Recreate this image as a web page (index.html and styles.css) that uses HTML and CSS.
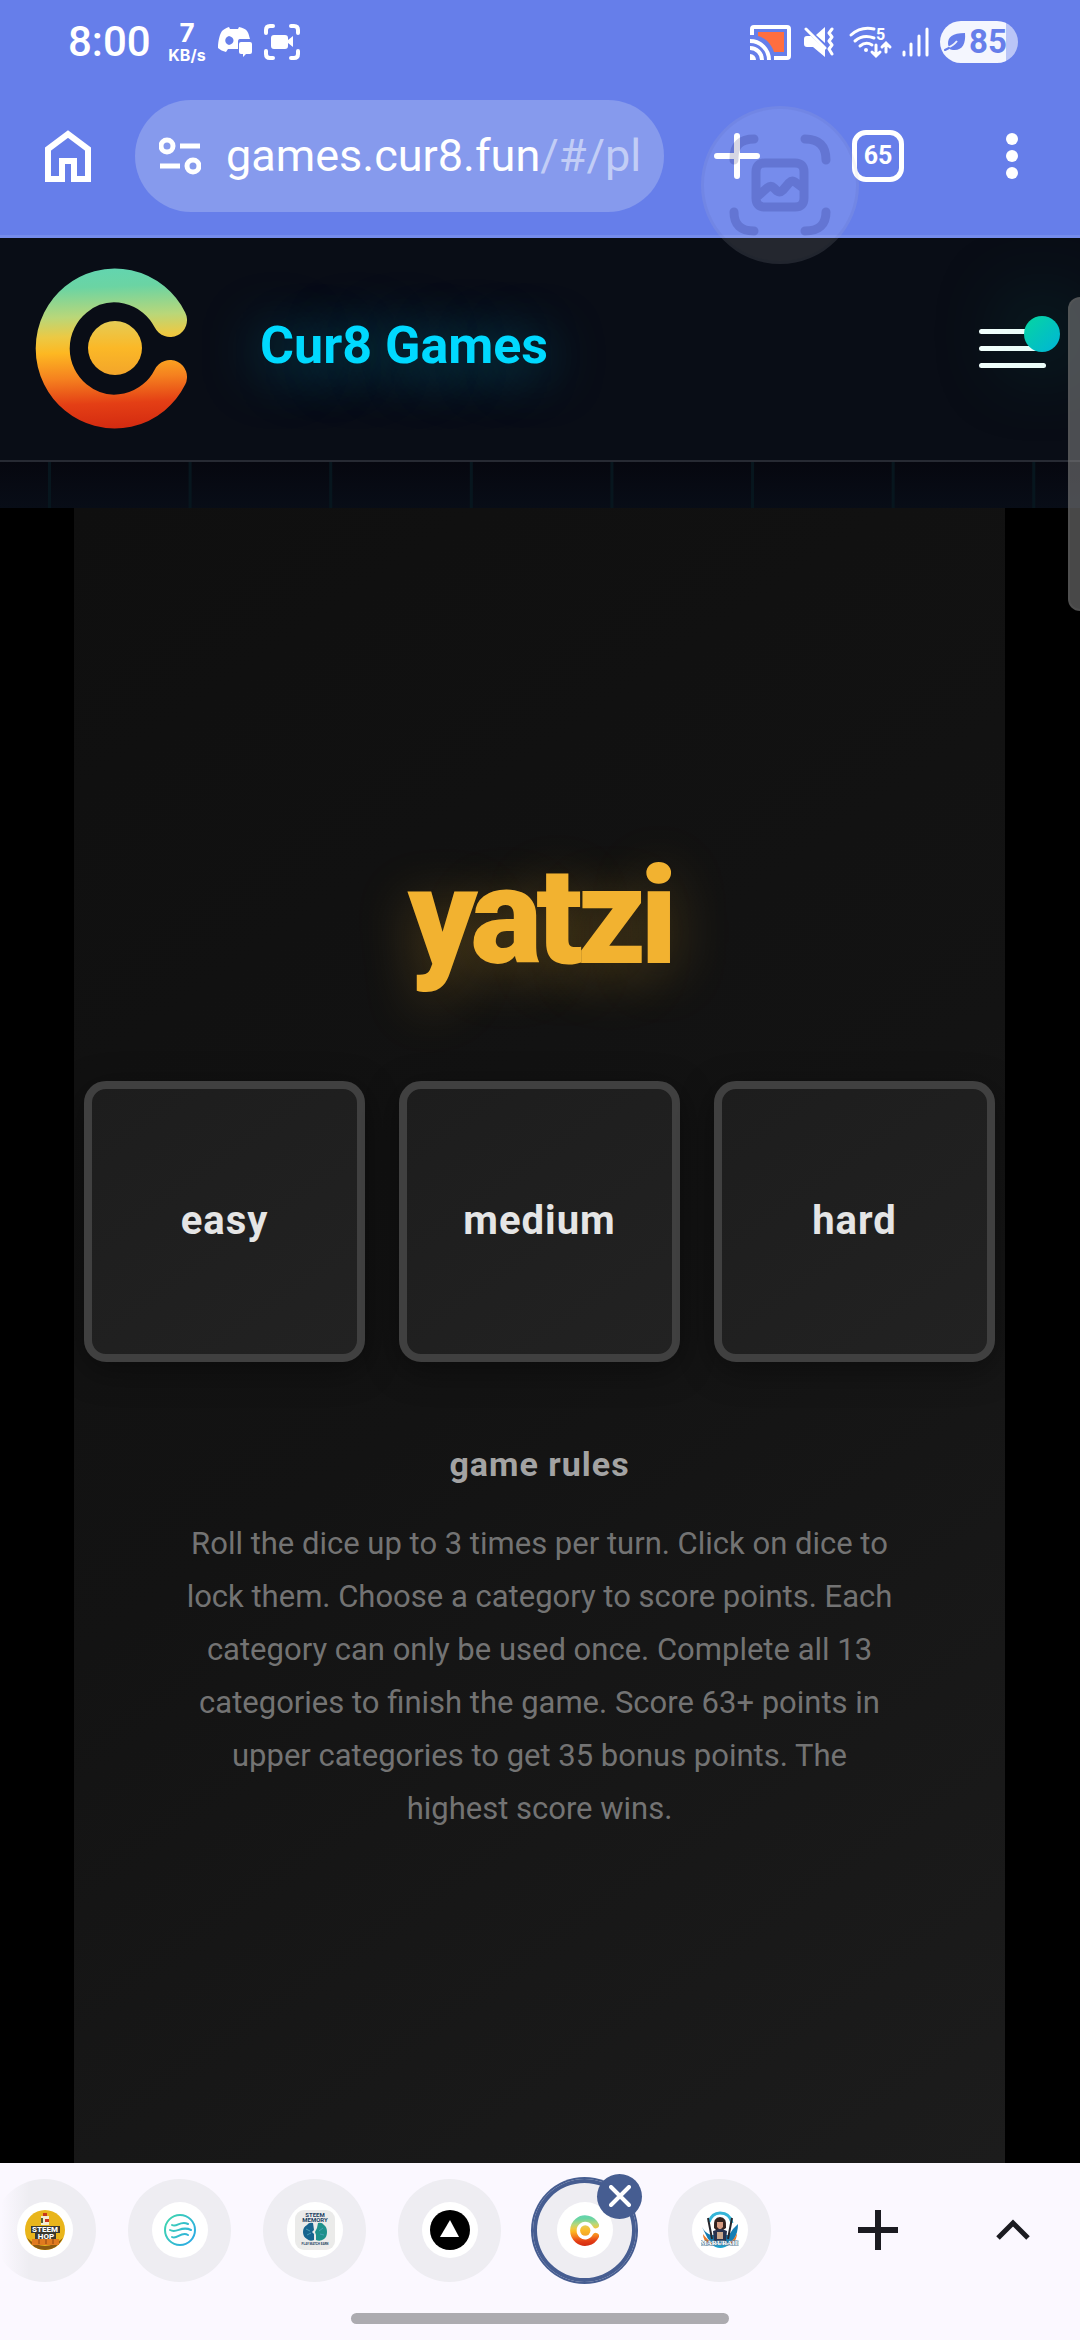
FILE: index.html
```html
<!DOCTYPE html>
<html lang="en">
<head>
<meta charset="utf-8">
<meta name="viewport" content="width=device-width, initial-scale=1">
<title>Cur8 Games - yatzi</title>
<link rel="stylesheet" href="styles.css">
</head>
<body>
<svg class="defs" aria-hidden="true">
  <defs>
    <linearGradient id="cur8-fill" gradientUnits="userSpaceOnUse" x1="75" y1="0" x2="81" y2="162">
      <stop offset="0" stop-color="#62d5b0"/>
      <stop offset=".12" stop-color="#6bd4a3"/>
      <stop offset=".3" stop-color="#b9d779"/>
      <stop offset=".42" stop-color="#ecc944"/>
      <stop offset=".52" stop-color="#fdb822"/>
      <stop offset=".68" stop-color="#f5811f"/>
      <stop offset=".84" stop-color="#e43f15"/>
      <stop offset="1" stop-color="#d32a10"/>
    </linearGradient>
    <linearGradient id="cur8-core" x1="0" y1="0" x2="0" y2="1">
      <stop offset="0" stop-color="#e5cc55"/>
      <stop offset=".5" stop-color="#fbb827"/>
      <stop offset="1" stop-color="#f3a52a"/>
    </linearGradient>
    <symbol id="cur8" viewBox="0 0 152 162">
      <path d="M135 53A62 63 0 1 0 135 110" fill="none" stroke="url(#cur8-fill)" stroke-width="34" stroke-linecap="round"/>
      <circle cx="80" cy="81" r="27" fill="url(#cur8-core)"/>
    </symbol>
  </defs>
</svg>

<header class="chrome">
  <div class="status">
    <span class="clock">8:00</span>
    <span class="speed"><b class="speed-value">7</b><span class="speed-unit">KB/s</span></span>
    <svg class="discord" width="34" height="30" viewBox="0 0 34 30" fill="#fff">
      <path fill-rule="evenodd" d="M11 0L12 2H20L21 0C25 1 28 2 29 4C31 7 31 9 32 12H22C20 12 20 14 20 15V22H10L8 25C5 24 2 23 0 21C0 13 2 7 4 4C6 2 8 1 11 0ZM11 9C6 10 6 17 11 18C17 17 17 10 11 9Z"/>
      <path d="M23 15H32Q34 15 34 17V25Q34 27 32 27H28L25 30V27H23Q21 27 21 25V17Q21 15 23 15Z"/>
    </svg>
    <svg width="36" height="36" viewBox="0 0 36 36" fill="none" stroke="#fff" stroke-width="4" stroke-linecap="round">
      <path d="M2 9V6Q2 2 6 2H9M27 2H30Q34 2 34 6V9M34 27V30Q34 34 30 34H27M9 34H6Q2 34 2 30V27"/>
      <path fill="#fff" stroke="none" d="M10 11H21Q24 11 24 14V16L29 12V23L24 19V22Q24 25 21 25H10Q7 25 7 22V14Q7 11 10 11Z"/>
    </svg>
    <span class="spacer"></span>
    <svg class="cast" width="41" height="35" viewBox="0 0 41 35">
      <path fill="#ff6e40" d="M8 7H34V27H24C21 18 15 13 8 11Z"/>
      <path fill="none" stroke="#fff" stroke-width="4" d="M2 10V4Q2 2 4 2H37Q39 2 39 4V31Q39 33 37 33H24M0 16A19 19 0 0 1 19 35M0 23A12 12 0 0 1 12 35"/>
      <path fill="#fff" d="M0 29A6 6 0 0 1 6 35H0Z"/>
    </svg>
    <svg class="mute" width="30" height="30" viewBox="0 0 30 30">
      <path fill="#fff" d="M0 12Q0 9 3 9H7L21 22V30L9 20H3Q0 20 0 17ZM12 8L21 0V16Z"/>
      <path fill="none" stroke="#fff" stroke-width="3" stroke-linecap="round" d="M2 2L21 21"/>
      <path fill="none" stroke="#fff" stroke-width="3" stroke-linecap="round" stroke-linejoin="round" d="M28 2L25 6L28 10L25 14L28 18L25 22L28 27"/>
    </svg>
    <svg class="wifi" width="43" height="32" viewBox="0 0 43 32" fill="none" stroke="#fff" stroke-width="3" stroke-linecap="round">
      <path d="M2 9Q12 0 25 3M6 15Q14 8 25 12M11 20Q17 15 23 19"/>
      <circle cx="17" cy="24" r="2" fill="#fff" stroke="none"/>
      <path d="M27 19V29M23 26L27 30L31 26M37 26V18M33 21L37 17L41 21"/>
      <text x="27" y="14" fill="#fff" stroke="none" class="wifi-band">5</text>
    </svg>
    <svg class="signal" width="27" height="30" viewBox="0 0 27 30" stroke="#fff" stroke-width="3" stroke-linecap="round">
      <path d="M2 25V28M9 17V28M17 9V28M25 2V28"/>
    </svg>
    <span class="battery">
      <svg width="22" height="20" viewBox="0 0 22 20"><path fill="#667eea" d="M4 12C4 5 8 1 21 1C22 12 18 19 9 18Q6 18 5 16Z"/><path fill="none" stroke="#eef1fd" stroke-width="2" d="M3 16Q9 14 13 9"/><path fill="none" stroke="#667eea" stroke-width="2" stroke-linecap="round" d="M1 18L5 16"/></svg>
      <span>85</span>
    </span>
  </div>
  <div class="toolbar">
    <button class="tool" aria-label="Home">
      <svg width="46" height="52" viewBox="0 0 46 52" fill="none" stroke="#fff" stroke-width="6"><path d="M3 49V19L23 4L43 19V49H29V31H17V49Z"/></svg>
    </button>
    <div class="omnibox">
      <button class="tool" aria-label="Site settings">
        <svg width="42" height="38" viewBox="0 0 42 38" fill="none" stroke="#fff" stroke-width="5"><circle cx="8" cy="9" r="6"/><circle cx="34" cy="29" r="6"/><path d="M21 9H41M1 29H21"/></svg>
      </button>
      <input class="host" type="text" aria-label="Address" value="games.cur8.fun"><span class="path">/#/pla</span>
    </div>
    <button class="tool new-tab" aria-label="New tab">
      <svg width="46" height="46" viewBox="0 0 46 46" stroke="#fff" stroke-width="6" stroke-linecap="round"><path d="M23 3V43M3 23H43"/></svg>
    </button>
    <button class="tabs" aria-label="Switch tabs">65</button>
    <button class="tool more" aria-label="More options">
      <svg width="12" height="48" viewBox="0 0 12 48" fill="#fff"><circle cx="6" cy="7" r="6"/><circle cx="6" cy="24" r="6"/><circle cx="6" cy="41" r="6"/></svg>
    </button>
  </div>
  <div class="capture" aria-hidden="true">
    <svg width="102" height="102" viewBox="0 0 102 102" fill="none" stroke="#000050" stroke-opacity=".16" stroke-width="9" stroke-linecap="round" stroke-linejoin="round">
      <path d="M5 26V24Q5 5 25 5M76 5Q97 5 97 26M97 78Q97 97 76 97M25 97Q5 97 5 78"/>
      <path d="M36 29H66Q75 29 75 38V64Q75 73 66 73H36Q27 73 27 64V38Q27 29 36 29ZM29 62L38 54Q42 51 45 54L48 57Q51 59 54 56L60 49Q63 46 66 48L74 54"/>
    </svg>
  </div>
</header>

<main class="page">
  <nav class="site-header">
    <svg class="logo" width="152" height="162" role="img" aria-label="Cur8"><use href="#cur8"/></svg>
    <a class="brand" href="#/">Cur8 Games</a>
    <button class="menu" aria-label="Menu"><span></span><span></span><span></span><i class="menu-dot"></i></button>
  </nav>
  <div class="grid-strip"></div>
  <section class="stage">
    <div class="game">
      <h1 class="title">yatzi</h1>
      <div class="levels">
        <button class="level">easy</button>
        <button class="level">medium</button>
        <button class="level">hard</button>
      </div>
      <h2 class="rules-title">game rules</h2>
      <p class="rules">Roll the dice up to 3 times per turn. Click on dice to lock them. Choose a category to score points. Each category can only be used once. Complete all 13 categories to finish the game. Score 63+ points in upper categories to get 35 bonus points. The highest score wins.</p>
    </div>
  </section>
  <div class="scrollbar"></div>
</main>

<footer class="tab-strip">
  <div class="strip-row">
    <div class="tab-list">
      <button class="tab faded" aria-label="Steem Hop">
        <span class="favicon"><svg width="40" height="40" viewBox="0 0 40 40">
          <circle cx="20" cy="20" r="20" fill="#e9b51b"/><path d="M2 28Q20 44 38 28Q32 40 20 40T2 28" fill="#8b5a12"/>
          <path d="M16 6H24V15H16Z" fill="#f4ecd0"/><path d="M18 3H22V6H18ZM20 9H24V12H20Z" fill="#c8361c"/><path d="M16 8H18V13H16Z" fill="#52603a"/>
          <path d="M6 16H35V23H31V30H10V23H6Z" fill="#3a3930"/><path d="M7 29H34V35H7Z" fill="#e07a1f"/><path d="M14 29V34M21 29V34M28 29V34" stroke="#8a4310"/>
          <text x="20" y="22" class="fav-hop">STEEM</text><text x="21" y="29" class="fav-hop">HOP</text>
        </svg></span>
      </button>
      <button class="tab" aria-label="Steem">
        <span class="favicon"><svg width="34" height="34" viewBox="0 0 34 34" fill="none" stroke="url(#steem)" stroke-width="2" stroke-linecap="round">
          <defs><linearGradient id="steem" gradientUnits="userSpaceOnUse" x1="2" y1="6" x2="32" y2="28"><stop offset="0" stop-color="#3fd6ae"/><stop offset="1" stop-color="#2ba9e6"/></linearGradient></defs>
          <circle cx="17" cy="17" r="15"/><path d="M9 12C14 15 17 7 25 11M7 17C14 21 18 12 28 17M9 24C14 27 18 18 25 22"/>
        </svg></span>
      </button>
      <button class="tab" aria-label="Steem Memory">
        <span class="favicon"><svg width="40" height="40" viewBox="0 0 40 40">
          <rect width="40" height="40" rx="9" fill="#ebebea"/>
          <text x="20" y="7" class="fav-mem">STEEM</text><text x="20" y="12" class="fav-mem">MEMORY</text>
          <path d="M18 13Q14 12 12 15Q8 17 8 22Q8 27 12 29Q15 32 19 30V24L17 22L19 20Z" fill="#17648f"/>
          <path d="M23 13Q27 12 29 15Q32 17 32 22Q32 27 29 29Q25 32 21 30V25L20 22L22 18Z" fill="#1f918b"/>
          <path d="M11 19L15 21M12 25L16 23M28 18L24 21M29 25L25 24" stroke="#4a9fb5" fill="none"/>
          <text x="20" y="35" class="fav-tiny">PLAY MATCH EARN</text>
        </svg></span>
      </button>
      <button class="tab" aria-label="Vercel">
        <span class="favicon"><svg width="40" height="40" viewBox="0 0 40 40"><circle cx="20" cy="20" r="20"/><path d="M20 10L29 27H10Z" fill="#fff"/></svg></span>
      </button>
      <div class="tab selected">
        <a class="favicon" href="#/play" aria-label="Cur8 Games"><svg width="29" height="31"><use href="#cur8"/></svg></a>
        <button class="close" aria-label="Close tab"><svg width="22" height="22" viewBox="0 0 22 22" stroke="#fff" stroke-width="4" stroke-linecap="round"><path d="M2 2L20 20M20 2L2 20"/></svg></button>
      </div>
      <button class="tab" aria-label="Maruraid">
        <span class="favicon"><svg width="38" height="38" viewBox="0 0 38 38">
          <path d="M8 11Q11 2 19 2Q29 2 31 12" fill="none" stroke="#35b5d8" stroke-width="3"/>
          <path d="M1 16Q5 24 7 28L12 32L28 32L33 28Q37 22 37 13Q31 18 28 24L10 24Q4 22 1 16Z" fill="#157db3"/>
          <path d="M2 23Q7 30 14 34L8 33Q2 30 2 23ZM36 22Q33 30 25 34L32 32Q36 28 36 22Z" fill="#e8792a"/>
          <path d="M7 7L11 28M31 7L27 28" stroke="#26262c" stroke-width="2"/>
          <path d="M13 17Q12 6 19 6Q26 6 25 17L22 19H15Z" fill="#33221f"/><path d="M16 11H22V16L19 19L16 16Z" fill="#d69a80"/>
          <path d="M12 20L18 18H21L26 20L25 30H13Z" fill="#28314d"/><path d="M16 21H22V28H16Z" fill="#c7a489"/>
          <path d="M10 33Q19 41 29 33Z" fill="#1aa0cf"/>
          <text x="19" y="34" class="fav-raid">MARURAID</text>
        </svg></span>
      </button>
    </div>
    <button class="tool add" aria-label="Add tab to group"><svg width="40" height="40" viewBox="0 0 40 40" stroke="#1b1b21" stroke-width="6"><path d="M20 0V40M0 20H40"/></svg></button>
    <button class="tool expand" aria-label="Show all tabs"><svg width="34" height="22" viewBox="0 0 34 22" fill="none" stroke="#1b1b21" stroke-width="5"><path d="M2 19L17 4L32 19"/></svg></button>
  </div>
  <div class="gesture"></div>
</footer>
</body>
</html>
```

FILE: styles.css
```css
*, *::before, *::after { box-sizing: border-box; }

body {
  margin: 0;
  min-height: 100vh;
  display: flex;
  flex-direction: column;
  background: #000;
  font-family: Roboto, sans-serif;
  overflow-x: hidden;
}

button { padding: 0; border: 0; background: none; font: inherit; color: inherit; cursor: pointer; }
svg { display: block; flex: none; }
.defs { position: absolute; width: 0; height: 0; }

/* Browser chrome */
.chrome {
  position: relative;
  z-index: 2;
  background: #667eea;
  border-bottom: 3px solid #758cec;
  color: #fff;
}

.status {
  display: flex;
  align-items: center;
  height: 84px;
  padding: 0 62px 0 68px;
}
.clock { font: 500 42px/48px Roboto, sans-serif; width: 100px; white-space: nowrap; }
.speed {
  display: flex;
  flex-direction: column;
  align-items: center;
  width: 38px;
  margin-right: 12px;
  font-family: Inter, sans-serif;
}
.speed-value { font-size: 26px; line-height: 26px; }
.speed-unit { font-size: 16px; line-height: 18px; font-weight: 700; }
.discord { margin-right: 12px; }
.spacer { flex: 1; }
.cast { margin-right: 13px; }
.mute { margin-right: 15px; }
.wifi { margin-right: 10px; overflow: visible; }
.wifi-band { font: 700 16px Roboto, sans-serif; }
.signal { margin-right: 11px; }
.battery {
  display: flex;
  align-items: center;
  gap: 3px;
  width: 78px;
  height: 42px;
  padding-left: 4px;
  border-radius: 21px;
  background: linear-gradient(90deg, #f4f6fe 66px, #bac5f7 66px);
  color: #667eea;
  font: 700 33px/42px Roboto, sans-serif;
}

.toolbar {
  display: flex;
  align-items: center;
  height: 151px;
  padding: 0 62px 7px 45px;
}
.tool { display: flex; align-items: center; justify-content: center; flex: none; }
.omnibox {
  display: flex;
  align-items: center;
  flex: 1;
  min-width: 0;
  height: 112px;
  margin: 0 50px 0 44px;
  padding: 0 23px 0 24px;
  border-radius: 56px;
  background: #869aed;
  font: 400 45px/60px Roboto, sans-serif;
}
.host {
  field-sizing: content;
  flex: none;
  margin-left: 25px;
  padding: 0;
  border: 0;
  outline: 0;
  background: none;
  color: #fff;
  font: inherit;
}
.path { flex: 1; min-width: 0; overflow: hidden; white-space: nowrap; color: #c2cdf6; }
.new-tab { margin-right: 92px; }
.tabs {
  width: 52px;
  height: 52px;
  margin-right: 102px;
  border: 5px solid #fff;
  border-radius: 14px;
  font: 700 25px/42px Roboto, sans-serif;
}

/* Floating capture bubble over the toolbar edge */
.capture {
  position: absolute;
  top: 106px;
  right: 221px;
  display: flex;
  align-items: center;
  justify-content: center;
  width: 158px;
  height: 158px;
  border: 3px solid rgba(0, 0, 60, .04);
  border-radius: 50%;
  background: rgba(255, 255, 255, .11);
}

/* Site */
.page { position: relative; flex: 1; display: flex; flex-direction: column; background: #000; }

.site-header {
  display: flex;
  align-items: center;
  height: 224px;
  padding: 0 34px 2px 35px;
  border-bottom: 2px solid #272a33;
  background: #090d16;
}
.brand {
  margin-left: 73px;
  padding-bottom: 4px;
  color: #00d9ff;
  font-size: 52px;
  line-height: 64px;
  font-weight: 700;
  text-decoration: none;
  text-shadow: 0 6px 56px rgba(0, 217, 255, .5);
}
.menu {
  position: relative;
  display: flex;
  flex-direction: column;
  gap: 12px;
  width: 67px;
  margin-left: auto;
}
.menu span { height: 5px; border-radius: 3px; background: #f4fffd; }
.menu-dot {
  position: absolute;
  top: -13px;
  right: -14px;
  width: 36px;
  height: 36px;
  border-radius: 50%;
  background: linear-gradient(135deg, #06d6a0, #00b4d8);
  box-shadow: 0 0 84px rgba(6, 214, 160, .5);
}

.grid-strip {
  height: 46px;
  background:
    linear-gradient(90deg, #07161e 3px, transparent 3px) 48px 0 / 13.02% 100%,
    linear-gradient(#06070f, #080d17);
}

.stage { flex: 1; display: flex; padding: 0 75px 0 74px; background: #000; }
.game {
  flex: 1;
  display: flex;
  flex-direction: column;
  align-items: center;
  justify-content: center;
  padding: 0 10px;
  background: linear-gradient(145deg, #0f0f0f, #131313 50%, #1c1c1c);
}
.title {
  margin: 0 0 84px;
  color: #f2b230;
  font-size: 135px;
  line-height: 160px;
  font-weight: 900;
  letter-spacing: -6px;
  text-shadow: 0 11px 56px rgba(242, 178, 48, .3);
}
.levels {
  display: grid;
  grid-template-columns: repeat(3, 1fr);
  gap: 34px;
  width: 100%;
  margin-bottom: 82px;
}
.level {
  aspect-ratio: 1;
  border: 8px solid #404040;
  border-radius: 22px;
  background: linear-gradient(145deg, #1d1d1d, #222);
  box-shadow: 0 8px 34px rgba(0, 0, 0, .4);
  color: #e5e5e5;
  font-size: 40px;
  line-height: 48px;
  font-weight: 700;
  letter-spacing: 1px;
}
.rules-title {
  margin: 0 0 33px;
  color: #a3a3a3;
  font-size: 34px;
  line-height: 40px;
  font-weight: 700;
  letter-spacing: 1px;
}
.rules {
  max-width: 720px;
  margin: 0;
  color: #737373;
  font-size: 31px;
  line-height: 53px;
  text-align: center;
}

.scrollbar {
  position: absolute;
  top: 59px;
  right: 0;
  width: 12px;
  height: 314px;
  border: 2px solid rgba(90, 90, 90, .4);
  border-right: 0;
  border-radius: 12px 0 0 12px;
  background: rgba(128, 128, 128, .56);
}

/* Bottom tab strip */
.tab-strip {
  display: flex;
  flex-direction: column;
  align-items: center;
  height: 177px;
  background: #fbf8ff;
}
.strip-row { display: flex; align-items: center; width: 100%; height: 134px; }
.tab-list { display: flex; gap: 32px; margin-left: -7px; }
.tab {
  position: relative;
  display: flex;
  align-items: center;
  justify-content: center;
  width: 103px;
  height: 103px;
  border-radius: 50%;
  background: #eeedf2;
}
.tab.faded { background: linear-gradient(90deg, #fbf8ff 8px, #eeedf2 36px); }
.tab.selected { box-shadow: 0 0 0 2px #465d91, inset 0 0 0 4px #465d91; }
.favicon {
  display: flex;
  align-items: center;
  justify-content: center;
  width: 56px;
  height: 56px;
  border-radius: 50%;
  background: #fff;
}
.close {
  position: absolute;
  top: -5px;
  right: -6px;
  display: flex;
  align-items: center;
  justify-content: center;
  width: 45px;
  height: 45px;
  border-radius: 50%;
  background: #465d91;
}
.fav-hop { font: 800 8px Roboto, sans-serif; fill: #fff; text-anchor: middle; }
.fav-mem { font: 700 6px Roboto, sans-serif; fill: #1d4263; text-anchor: middle; }
.fav-tiny { font: 700 3px Roboto, sans-serif; fill: #1d4263; text-anchor: middle; }
.fav-raid { font: 800 7px "Liberation Serif", serif; fill: #fff; stroke: #5b7f99; stroke-width: 1px; paint-order: stroke; text-anchor: middle; }
.add { margin-left: auto; margin-right: 98px; }
.expand { margin-right: 50px; }
.gesture { width: 35%; height: 11px; margin-top: 16px; border-radius: 6px; background: #acabb0; }
```
